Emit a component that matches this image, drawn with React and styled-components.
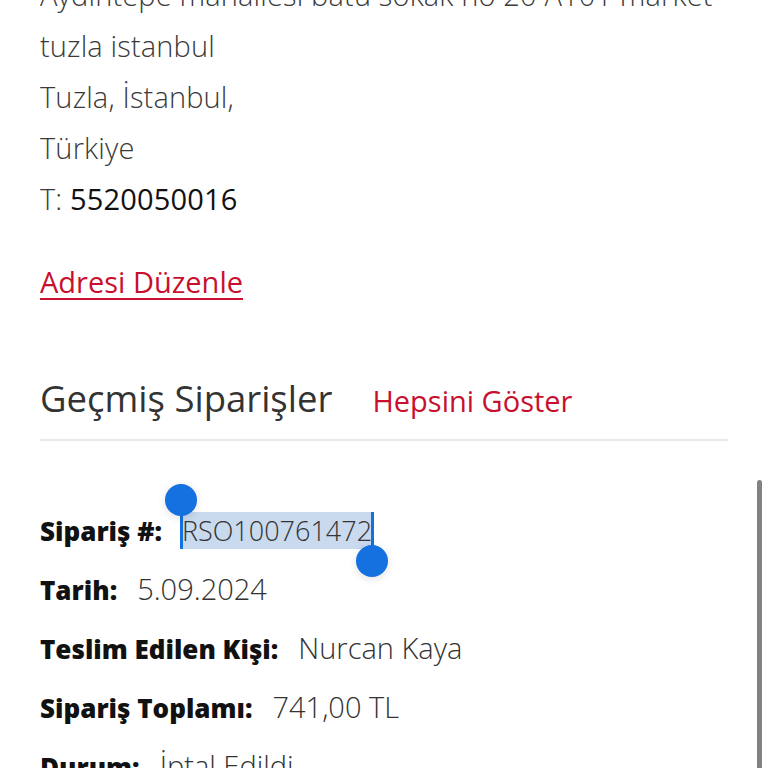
import React from 'react';
import styled, { createGlobalStyle } from 'styled-components';

const GlobalStyle = createGlobalStyle`
  html, body {
    margin: 0;
    padding: 0;
    background: #ffffff;
    overflow: hidden;
  }
  body {
    font-family: "Open Sans", "Noto Sans", sans-serif;
    color: #333333;
  }
`;

const Screen = styled.div`
  position: relative;
  width: 768px;
  height: 768px;
  overflow: hidden;
`;

const Content = styled.div`
  margin-top: -31px;
  padding: 0 40px;
`;

const Address = styled.div`
  font-size: 29px;
  font-weight: 300;
  line-height: 51px;
  letter-spacing: 0.15px;
  color: #3a3a3a;
  white-space: nowrap;
`;

const Phone = styled.span`
  font-weight: 400;
  color: #111111;
`;

const EditLink = styled.a`
  display: inline-block;
  margin-top: 38px;
  font-size: 29px;
  font-weight: 400;
  line-height: 40px;
  color: #c8102e;
  text-decoration: underline;
  text-underline-offset: 5px;
  text-decoration-thickness: 2px;
`;

const SectionHead = styled.div`
  display: flex;
  align-items: baseline;
  gap: 40px;
  margin-top: 74px;
  padding-bottom: 19px;
  border-bottom: 2px solid #e9e9e9;
`;

const Title = styled.h2`
  margin: 0;
  font-size: 36.5px;
  font-weight: 400;
  line-height: 44px;
  color: #333333;
`;

const ShowAll = styled.a`
  font-size: 29px;
  font-weight: 500;
  color: #c8102e;
  text-decoration: none;
`;

const Orders = styled.div`
  display: flex;
  flex-direction: column;
  gap: 19px;
  margin-top: 69px;
`;

const Row = styled.div`
  display: flex;
  align-items: baseline;
  gap: 20px;
  height: 40px;
  line-height: 40px;
  white-space: nowrap;
`;

const Label = styled.span`
  font-size: 26px;
  font-weight: 800;
  color: #111111;
`;

const Value = styled.span`
  font-size: 29px;
  font-weight: 300;
  color: #333333;
`;

const Selected = styled.span`
  position: relative;
  background: #c9d9ee;
  font-size: 27px;
`;

const Handle = styled.span`
  position: absolute;
  width: 3px;
  background: #1570e0;
  ${({ $end }) => ($end ? 'right: -2px; top: 0; bottom: -12px;' : 'left: -2px; top: -12px; bottom: 0;')}
  &::after {
    content: '';
    position: absolute;
    left: -15px;
    width: 32px;
    height: 32px;
    border-radius: 50%;
    background: #1570e0;
    box-shadow: 0 2px 8px rgba(0, 0, 0, 0.12);
    ${({ $end }) => ($end ? 'bottom: -16px;' : 'top: -16px;')}
  }
`;

const Scrollbar = styled.div`
  position: absolute;
  right: 6px;
  top: 480px;
  width: 5px;
  height: 300px;
  border-radius: 3px;
  background: #828282;
`;

const orders = [
  { label: 'Sipariş #:', value: 'RSO100761472', selected: true },
  { label: 'Tarih:', value: '5.09.2024' },
  { label: 'Teslim Edilen Kişi:', value: 'Nurcan Kaya' },
  { label: 'Sipariş Toplamı:', value: '741,00 TL' },
  { label: 'Durum:', value: 'İptal Edildi' },
];

export default function App() {
  return (
    <Screen>
      <GlobalStyle />
      <Content>
        <Address>
          <div>Aydıntepe mahallesi batu sokak no 20 A101 market</div>
          <div>tuzla istanbul</div>
          <div>Tuzla, İstanbul,</div>
          <div>Türkiye</div>
          <div>
            T: <Phone>5520050016</Phone>
          </div>
        </Address>
        <EditLink href="#">Adresi Düzenle</EditLink>
        <SectionHead>
          <Title>Geçmiş Siparişler</Title>
          <ShowAll href="#">Hepsini Göster</ShowAll>
        </SectionHead>
        <Orders>
          {orders.map((o) => (
            <Row key={o.label}>
              <Label>{o.label}</Label>
              <Value>
                {o.selected ? (
                  <Selected>
                    <Handle />
                    {o.value}
                    <Handle $end />
                  </Selected>
                ) : (
                  o.value
                )}
              </Value>
            </Row>
          ))}
        </Orders>
      </Content>
      <Scrollbar />
    </Screen>
  );
}
